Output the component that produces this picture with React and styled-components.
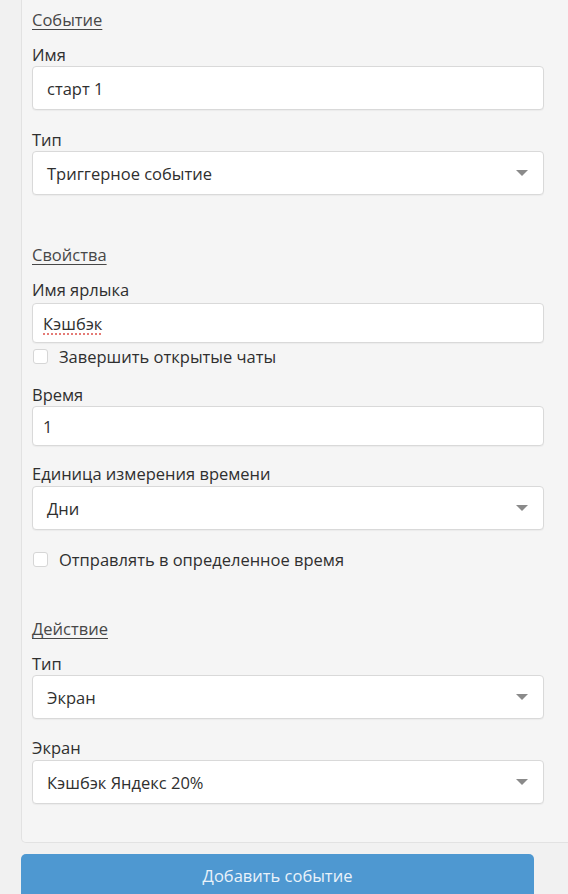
import React from 'react';
import styled, { createGlobalStyle } from 'styled-components';

const GlobalStyle = createGlobalStyle`
    html, body {
        margin: 0;
        padding: 0;
        background: #f1f1f1;
        overflow: hidden;
    }

    body {
        font-family: "Open Sans", "Noto Sans", sans-serif;
        color: #2f2f2f;
    }

    * {
        box-sizing: border-box;
    }
`;

const StyledPage = styled.div`
    display: flex;
    flex-direction: column;
    padding-left: 21px;
    width: 574px;
`;

const StyledPanel = styled.div`
    display: flex;
    flex-direction: column;
    padding: 9px 29px 38px 10px;
    background: #f5f5f5;
    border: 1px solid #e2e2e2;
    border-top: none;
    border-radius: 0 0 0 5px;
`;

const StyledSection = styled.section`
    display: flex;
    flex-direction: column;
    margin-bottom: ${({ $last }) => ($last ? '0' : '30px')};
`;

const StyledTitle = styled.h3`
    margin: 0 0 13px;
    font-size: 16.5px;
    font-weight: 400;
    line-height: 22px;
    color: #474747;
    text-decoration: underline;
    text-underline-offset: 3px;
    text-decoration-thickness: 1px;
`;

const StyledField = styled.div`
    display: flex;
    flex-direction: column;
    margin-bottom: ${({ $gap }) => $gap}px;
`;

const StyledLabel = styled.label`
    font-size: 16.5px;
    line-height: 22px;
    color: #2f2f2f;
    margin-bottom: ${({ $gap = 0 }) => $gap}px;
`;

const StyledInput = styled.input`
    display: block;
    width: 100%;
    height: ${({ $height = 40 }) => $height}px;
    padding: 0 10px;
    font-family: inherit;
    font-size: 16.5px;
    color: #2f2f2f;
    background: #fff;
    border: 1px solid #d9d9d9;
    border-radius: 4px;
    box-shadow: 0 1px 1px rgba(0, 0, 0, 0.04);
    outline: none;
    text-decoration: ${({ $misspelled }) =>
        $misspelled ? 'underline dotted #e0605a' : 'none'};
    text-underline-offset: 4px;
`;

const StyledSelect = styled.div`
    display: flex;
    align-items: center;
    justify-content: space-between;
    height: 44px;
    padding: 0 15px 0 14px;
    font-size: 16.5px;
    color: #2f2f2f;
    background: #fff;
    border: 1px solid #d9d9d9;
    border-radius: 4px;
    box-shadow: 0 1px 1px rgba(0, 0, 0, 0.04);
`;

const StyledCaret = styled.span`
    width: 0;
    height: 0;
    border-left: 6px solid transparent;
    border-right: 6px solid transparent;
    border-top: 6px solid #8a8a8a;
`;

const StyledCheckRow = styled.label`
    display: flex;
    align-items: center;
    gap: 11px;
    height: 22px;
    margin-bottom: ${({ $gap }) => $gap}px;
    font-size: 16.5px;
    color: #2f2f2f;
`;

const StyledCheckbox = styled.span`
    width: 15px;
    height: 15px;
    margin-left: 1px;
    background: #fff;
    border: 1px solid #d6d6d6;
    border-radius: 3px;
`;

const StyledButton = styled.button`
    margin-top: 11px;
    width: 513px;
    height: 46px;
    padding-bottom: 4px;
    font-family: inherit;
    font-size: 16.5px;
    color: #e9f2fa;
    background: #4e98d1;
    border: none;
    border-radius: 5px;
    cursor: pointer;
`;

const Select = ({ value }) => (
    <StyledSelect>
        <span>{value}</span>
        <StyledCaret />
    </StyledSelect>
);

const App = () => (
    <>
        <GlobalStyle />
        <StyledPage>
            <StyledPanel>
                <StyledSection>
                    <StyledTitle>Событие</StyledTitle>
                    <StyledField $gap={19}>
                        <StyledLabel>Имя</StyledLabel>
                        <StyledInput
                            $height={44}
                            style={{ paddingLeft: 14 }}
                            defaultValue="старт 1"
                        />
                    </StyledField>
                    <StyledField $gap={19}>
                        <StyledLabel>Тип</StyledLabel>
                        <Select value="Триггерное событие" />
                    </StyledField>
                </StyledSection>

                <StyledSection>
                    <StyledTitle>Свойства</StyledTitle>
                    <StyledField $gap={2}>
                        <StyledLabel $gap={2}>Имя ярлыка</StyledLabel>
                        <StyledInput $misspelled defaultValue="Кэшбэк" />
                    </StyledField>
                    <StyledCheckRow $gap={17}>
                        <StyledCheckbox />
                        Завершить открытые чаты
                    </StyledCheckRow>
                    <StyledField $gap={17}>
                        <StyledLabel>Время</StyledLabel>
                        <StyledInput defaultValue="1" />
                    </StyledField>
                    <StyledField $gap={18}>
                        <StyledLabel $gap={1}>Единица измерения времени</StyledLabel>
                        <Select value="Дни" />
                    </StyledField>
                    <StyledCheckRow $gap={18}>
                        <StyledCheckbox />
                        Отправлять в определенное время
                    </StyledCheckRow>
                </StyledSection>

                <StyledSection $last>
                    <StyledTitle>Действие</StyledTitle>
                    <StyledField $gap={18}>
                        <StyledLabel>Тип</StyledLabel>
                        <Select value="Экран" />
                    </StyledField>
                    <StyledField $gap={0}>
                        <StyledLabel $gap={1}>Экран</StyledLabel>
                        <Select value="Кэшбэк Яндекс 20%" />
                    </StyledField>
                </StyledSection>
            </StyledPanel>
            <StyledButton type="button">Добавить событие</StyledButton>
        </StyledPage>
    </>
);

export default App;
